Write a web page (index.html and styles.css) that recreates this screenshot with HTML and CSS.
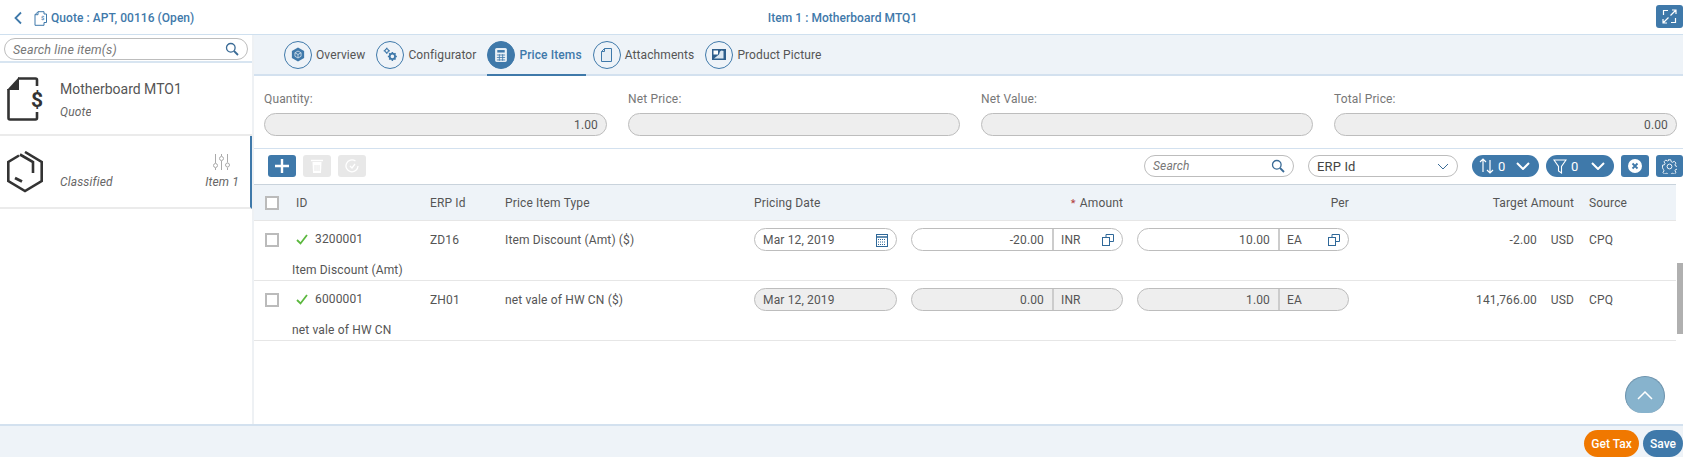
FILE: index.html
```html
<!DOCTYPE html>
<html lang="en">
<head>
    <meta charset="UTF-8">
    <title>Item 1 : Motherboard MTQ1</title>
    <link rel="stylesheet" href="styles.css">
</head>
<body>
    <header class="topbar">
        <div class="crumb">
            <svg class="back" width="10" height="14" viewBox="0 0 10 14"><path d="M8 1.500 2.500 7 8 12.500" fill="none" stroke="#3f79aa" stroke-width="1.800"/></svg>
            <svg class="crumb-doc" width="13" height="15" viewBox="0 0 13 15"><path d="M4 .7h6v2.300M1 3.700V14.300h9v-2.800M4 .7v3H1zM10 3h2.500v8.500H10" fill="none" stroke="#3f79aa"/><text x="7" y="9" font-size="6" fill="#3f79aa" font-family="Roboto">$</text></svg>
            <span>Quote : APT, 00116 (Open)</span>
        </div>
        <div class="topbar-title">Item 1 : Motherboard MTQ1</div>
        <div class="topbar-end">
            <button class="square-btn expand">
                <svg width="15" height="15" viewBox="0 0 15 15" fill="none" stroke="#fff" stroke-width="1.200"><path d="M6 1.500H1.500V6M9 13.500h4.500V9M8.500 6.500l5-5M10 1h4v4M6.500 8.500l-5 5M1 10v4h4"/></svg>
            </button>
        </div>
    </header>

    <div class="main">
        <aside class="sidebar">
            <div class="side-search">
                <div class="pill search-pill">
                    <span class="placeholder">Search line item(s)</span>
                    <svg width="14" height="14" viewBox="0 0 14 14" fill="none" stroke="#3a6b96" stroke-width="1.300"><circle cx="5.800" cy="5.800" r="4.300"/><path d="m9 9 4 4" stroke-width="1.800"/></svg>
                </div>
            </div>
            <div class="side-item">
                <svg class="side-icon" width="36" height="44" viewBox="0 0 36 44"><path d="M11 1.500h17.500a1.500 1.500 0 0 1 1.500 1.500v6M30 35v6a1.500 1.500 0 0 1-1.500 1.500H3A1.500 1.500 0 0 1 1.500 41V12" fill="none" stroke="#333" stroke-width="2.600"/><path d="M0 13 12 0v13z" fill="#333"/><text x="30" y="30" text-anchor="middle" font-size="21" font-weight="700" fill="#333" font-family="Roboto">$</text></svg>
                <div class="side-text">
                    <div class="side-name">Motherboard MTO1</div>
                    <div class="side-sub quote-sub">Quote</div>
                </div>
            </div>
            <div class="side-item active">
                <svg class="side-icon" width="36" height="42" viewBox="0 0 36 42" fill="none" stroke="#333" stroke-width="2.600"><path d="M12 4.500 1.300 11v19L18 40l16.700-10V11L18 1M13 3.500l13 7.500v11"/><path d="m8 27 7 3.500" stroke-width="2.800"/></svg>
                <div class="side-text">
                    <div class="side-name">&nbsp;</div>
                    <div class="side-sub class-sub">Classified</div>
                </div>
                <div class="side-end">
                    <svg width="17" height="16" viewBox="0 0 17 16" fill="none" stroke="#aaa"><path d="M2.500 0v9M2.500 14v2M8.500 0v2M8.500 7v9M14.500 0v8.500M14.500 13.500V16"/><circle cx="2.500" cy="11.500" r="2"/><circle cx="8.500" cy="4.500" r="2"/><circle cx="14.500" cy="11" r="2"/></svg>
                    <span class="side-sub">Item 1</span>
                </div>
            </div>
        </aside>

        <section class="content">
            <nav class="tabs">
                <a class="tab">
                    <span class="tab-circle"><svg width="14" height="15" viewBox="0 0 16 17"><path d="M8 .5 15 4.500v8l-7 4-7-4v-8z" fill="#3f79aa"/><path d="M8 4.500 11.500 6.500v4L8 12.500l-3.500-2v-4zM8 8.500v4M4.500 6.500l3.500 2 3.500-2" fill="none" stroke="#cfdde9"/></svg></span>
                    Overview
                </a>
                <a class="tab">
                    <span class="tab-circle"><svg width="15" height="15" viewBox="0 0 20 20" fill="none" stroke="#3f79aa"><circle cx="5" cy="5" r="2.300" stroke-width="1.500"/><circle cx="12.500" cy="12.500" r="3.600" stroke-width="2.400"/><path d="M12.500 6.500v2M12.500 16.500v2M6.500 12.500h2M16.500 12.500h2M8.300 8.300l1.400 1.400M15.300 15.300l1.400 1.400M16.700 8.300l-1.400 1.400M9.700 15.300l-1.400 1.400M5 1v1.500M5 7.500V9M1 5h1.500M7.500 5H9" stroke-width="2"/></svg></span>
                    Configurator
                </a>
                <a class="tab active">
                    <span class="tab-circle"><svg width="12" height="14" viewBox="0 0 14 17"><rect x=".5" y=".5" width="13" height="16" rx="1" fill="#e9f0f6" stroke="#fff"/><rect x="2.500" y="2.500" width="9" height="3" fill="#3f79aa"/><path d="M2 8.500h10M2 11.500h10M2 14.500h10M5 7.500v8M9 7.500v8" stroke="#3f79aa"/></svg></span>
                    Price Items
                </a>
                <a class="tab">
                    <span class="tab-circle"><svg width="11" height="14" viewBox="0 0 11 14"><path d="M3.500.5h7v13H.5V3.500zM3.500.5v3h-3" fill="#e6eef5" stroke="#3f79aa"/></svg></span>
                    Attachments
                </a>
                <a class="tab">
                    <span class="tab-circle"><svg width="14" height="11" viewBox="0 0 14 11"><rect width="14" height="11" fill="#2f5f8c"/><rect x="1.500" y="1.500" width="4.500" height="4" fill="#fff"/><path d="m2 9.500 5-4 1-3 1.500-1 2 .5v7.500z" fill="#dbe7f1"/></svg></span>
                    Product Picture
                </a>
            </nav>

            <div class="summary">
                <div class="field">
                    <label>Quantity:</label>
                    <div class="pill readonly num">1.00</div>
                </div>
                <div class="field">
                    <label>Net Price:</label>
                    <div class="pill readonly num"></div>
                </div>
                <div class="field">
                    <label>Net Value:</label>
                    <div class="pill readonly num"></div>
                </div>
                <div class="field">
                    <label>Total Price:</label>
                    <div class="pill readonly num">0.00</div>
                </div>
            </div>

            <div class="toolbar">
                <button class="square-btn wide">
                    <svg width="14" height="14" viewBox="0 0 14 14"><path d="M7 0v14M0 7h14" stroke="#fff" stroke-width="2.400"/></svg>
                </button>
                <button class="square-btn wide off">
                    <svg width="12" height="14" viewBox="0 0 12 14"><path d="M0 1.500h12" stroke="#fff" stroke-width="1.500"/><path d="M1.500 3h9L10 14H2z" fill="#fff"/><path d="M4 6v6M6 6v6M8 6v6" stroke="#e8e8e8"/></svg>
                </button>
                <button class="square-btn wide off">
                    <svg width="14" height="14" viewBox="0 0 14 14" fill="none" stroke="#fff" stroke-width="1.300"><path d="M10.500 2A6 6 0 1 0 13 7"/><path d="m5 7 2 2 3-4"/></svg>
                </button>
                <div class="toolbar-end">
                    <div class="pill search-pill tool-search">
                        <span class="placeholder">Search</span>
                        <svg width="14" height="14" viewBox="0 0 14 14" fill="none" stroke="#3a6b96" stroke-width="1.300"><circle cx="5.800" cy="5.800" r="4.300"/><path d="m9 9 4 4" stroke-width="1.800"/></svg>
                    </div>
                    <div class="pill tool-select">
                        <span>ERP Id</span>
                        <svg width="12" height="7" viewBox="0 0 12 7"><path d="m1 1 5 5 5-5" fill="none" stroke="#3a6b96"/></svg>
                    </div>
                    <button class="count-pill sort">
                        <svg width="15" height="16" viewBox="0 0 15 16" fill="none" stroke="#fff" stroke-width="1.200"><path d="M4 14V1M1 4l3-3 3 3M11 2v13M8 12l3 3 3-3"/></svg>
                        <span>0</span>
                        <svg class="caret" width="14" height="8" viewBox="0 0 14 8"><path d="m1 1 6 6 6-6" fill="none" stroke="#fff" stroke-width="2"/></svg>
                    </button>
                    <button class="count-pill filter">
                        <svg width="14" height="15" viewBox="0 0 14 15" fill="none" stroke="#fff" stroke-width="1.100"><path d="M1 1h12L8.500 7.500V14l-3-2V7.500z"/></svg>
                        <span>0</span>
                        <svg class="caret" width="14" height="8" viewBox="0 0 14 8"><path d="m1 1 6 6 6-6" fill="none" stroke="#fff" stroke-width="2"/></svg>
                    </button>
                    <button class="square-btn clear">
                        <svg width="14" height="14" viewBox="0 0 14 14"><circle cx="7" cy="7" r="7" fill="#fff"/><path d="m4.500 4.500 5 5m0-5-5 5" stroke="#3f79aa" stroke-width="1.800"/></svg>
                    </button>
                    <button class="square-btn gear">
                        <svg width="15" height="15" viewBox="0 0 15 15" fill="none" stroke="#fff" stroke-width=".9"><path d="M6.200.8h2.600l.4 1.900 1.300.6 1.700-1 1.800 1.800-1 1.700.6 1.300 1.900.4v2.600l-1.900.4-.6 1.300 1 1.700-1.800 1.800-1.700-1-1.300.6-.4 1.900H6.200l-.4-1.900-1.300-.6-1.700 1-1.800-1.800 1-1.700-.6-1.300L.5 8.800V6.200l1.900-.4.6-1.300-1-1.700 1.800-1.800 1.700 1 1.300-.6z"/><circle cx="7.500" cy="7.500" r="2.400"/></svg>
                    </button>
                </div>
            </div>

            <div class="table">
                <div class="grid-row head">
                    <span class="check"></span>
                    <span>ID</span>
                    <span>ERP Id</span>
                    <span>Price Item Type</span>
                    <span>Pricing Date</span>
                    <span class="right amount-head"><i class="star">*</i> Amount</span>
                    <span class="right">Per</span>
                    <span class="right span-2">Target Amount</span>
                    <span class="source">Source</span>
                </div>

                <div class="line">
                    <div class="grid-row">
                        <span class="check"></span>
                        <span class="id-cell"><svg width="12" height="11" viewBox="0 0 12 11"><path d="m1 6 3.500 3.500L11 1" fill="none" stroke="#5cb83f" stroke-width="1.800"/></svg>3200001</span>
                        <span>ZD16</span>
                        <span>Item Discount (Amt) ($)</span>
                        <div class="pill input date">
                            Mar 12, 2019
                            <svg width="12" height="14" viewBox="0 0 12 14" fill="none" stroke="#2f6899"><rect x=".5" y="1.500" width="11" height="12"/><path d="M.5 4h11" stroke-width="1.500"/><path d="M2 6.500h8M2 9h8M2 11.500h8" stroke-dasharray="1 1"/></svg>
                        </div>
                        <div class="pill input combo">
                            <span class="combo-num">-20.00</span>
                            <span class="combo-unit">INR<svg width="12" height="12" viewBox="0 0 12 12" fill="none" stroke="#2f6899"><rect x=".5" y="3.500" width="7" height="8"/><path d="M4 3.500V.5h7.500v7h-4"/></svg></span>
                        </div>
                        <div class="pill input combo">
                            <span class="combo-num">10.00</span>
                            <span class="combo-unit">EA<svg width="12" height="12" viewBox="0 0 12 12" fill="none" stroke="#2f6899"><rect x=".5" y="3.500" width="7" height="8"/><path d="M4 3.500V.5h7.500v7h-4"/></svg></span>
                        </div>
                        <span class="right">-2.00</span>
                        <span class="right">USD</span>
                        <span class="source">CPQ</span>
                    </div>
                    <div class="line-note">Item Discount (Amt)</div>
                </div>

                <div class="line">
                    <div class="grid-row">
                        <span class="check"></span>
                        <span class="id-cell"><svg width="12" height="11" viewBox="0 0 12 11"><path d="m1 6 3.500 3.500L11 1" fill="none" stroke="#5cb83f" stroke-width="1.800"/></svg>6000001</span>
                        <span>ZH01</span>
                        <span>net vale of HW CN ($)</span>
                        <div class="pill input date readonly">Mar 12, 2019</div>
                        <div class="pill input combo readonly">
                            <span class="combo-num">0.00</span>
                            <span class="combo-unit">INR</span>
                        </div>
                        <div class="pill input combo readonly">
                            <span class="combo-num">1.00</span>
                            <span class="combo-unit">EA</span>
                        </div>
                        <span class="right">141,766.00</span>
                        <span class="right">USD</span>
                        <span class="source">CPQ</span>
                    </div>
                    <div class="line-note">net vale of HW CN</div>
                </div>

                <div class="scroll-thumb"></div>
            </div>

            <div class="to-top">
                <svg width="16" height="9" viewBox="0 0 16 9"><path d="m1 8 7-7 7 7" fill="none" stroke="#fff" stroke-width="1.500"/></svg>
            </div>
        </section>
    </div>

    <footer class="footer">
        <button class="round-btn tax">Get Tax</button>
        <button class="round-btn save">Save</button>
    </footer>
</body>
</html>
```

FILE: styles.css
```css
* {
    margin: 0;
    padding: 0;
    box-sizing: border-box;
}

body {
    font-family: Roboto, 'Liberation Sans', sans-serif;
    font-size: 12px;
    letter-spacing: .15px;
    color: #555;
    background: #fff;
    width: 1683px;
    height: 457px;
    overflow: hidden;
    display: flex;
    flex-direction: column;
}

button {
    border: none;
    font-family: inherit;
}

.topbar {
    height: 35px;
    flex: none;
    display: grid;
    grid-template-columns: 1fr 1fr 1fr;
    align-items: center;
    border-bottom: 1px solid #cfe0ef;
    color: #3f79aa;
    font-weight: 500;
    font-size: 12px;
    letter-spacing: .05px;
}

.crumb {
    display: flex;
    align-items: center;
    padding: 2px 0 0 13px;
}

.crumb-doc {
    margin: 0 4px 0 11px;
}

.topbar-title {
    text-align: center;
    padding: 2px 0 0 2px;
}

.topbar-end {
    display: flex;
    justify-content: flex-end;
}

.square-btn {
    background: #3f79aa;
    border-radius: 3px;
    display: flex;
    align-items: center;
    justify-content: center;
    width: 27px;
    height: 23px;
}

.expand {
    margin-bottom: 1px;
}

.main {
    flex: 1;
    display: flex;
    min-height: 0;
}

.sidebar {
    width: 254px;
    flex: none;
    border-right: 2px solid #eef1f4;
}

.side-search {
    height: 28px;
    padding: 3px 4px 0;
    border-bottom: 2px solid #d8e5f1;
}

.pill {
    border: 1px solid #bdbdbd;
    border-radius: 12px;
    height: 23px;
    display: flex;
    align-items: center;
    background: #fff;
}

.search-pill {
    justify-content: space-between;
    padding: 0 8px;
    height: 22px;
}

.placeholder {
    font-style: italic;
    color: #777;
}

.side-search .placeholder {
    font-size: 12.500px;
}

.side-item {
    height: 73px;
    display: flex;
    align-items: center;
    border-bottom: 2px solid #ebebeb;
    padding-left: 7px;
}

.side-item.active {
    border-right: 2px solid #3f79aa;
}

.side-text {
    margin-left: 17px;
}

.active .side-text {
    margin-top: -6px;
}

.side-name {
    font-size: 14px;
    letter-spacing: 0;
    color: #555;
    height: 20px;
    line-height: 20px;
    margin-bottom: 6px;
}

.side-sub {
    font-style: italic;
    color: #666;
    overflow: hidden;
    white-space: nowrap;
}

.quote-sub {
    width: 31px;
}

.class-sub {
    width: 53px;
}

.side-end {
    margin: -1px 11px 0 auto;
    display: flex;
    flex-direction: column;
    align-items: flex-end;
    gap: 5px;
}

.side-end svg {
    margin-right: 9px;
}

.content {
    flex: 1;
    min-width: 0;
    position: relative;
}

.tabs {
    height: 41px;
    background: #eef3f8;
    border-bottom: 2px solid #d3e1ef;
    display: flex;
    padding-left: 30px;
    gap: 7px;
    letter-spacing: .1px;
}

.tab {
    display: flex;
    align-items: center;
    gap: 4px;
    padding-right: 4px;
    height: 41px;
    color: #555;
    border-bottom: 2px solid transparent;
}

.tab.active {
    color: #3f79aa;
    font-weight: 500;
    border-bottom-color: #3f79aa;
}

.tab-circle {
    width: 28px;
    height: 28px;
    border: 1px solid #3f79aa;
    border-radius: 50%;
    display: flex;
    align-items: center;
    justify-content: center;
    flex: none;
}

.tab.active .tab-circle {
    background: #3f79aa;
}

.summary {
    height: 73px;
    display: grid;
    grid-template-columns: 343px 332px 332px 343px;
    column-gap: 21px;
    padding: 16px 6px 0 10px;
    border-bottom: 1px solid #d3e1ef;
}

.field label {
    display: block;
    color: #777;
    height: 14px;
    line-height: 14px;
    margin-bottom: 7px;
}

.readonly {
    background: #eee;
}

.num {
    justify-content: flex-end;
    padding-right: 8px;
}

.toolbar {
    height: 35px;
    display: flex;
    align-items: center;
    gap: 7px;
    padding: 0 0 1px 14px;
}

.wide {
    width: 28px;
    height: 22px;
}

.off {
    background: #e8e8e8;
}

.toolbar-end {
    margin-left: auto;
    display: flex;
    align-items: center;
}

.tool-search {
    width: 150px;
    margin-right: 14px;
}

.tool-select {
    width: 150px;
    height: 22px;
    justify-content: space-between;
    padding: 0 8px;
    margin-right: 14px;
    color: #444;
    font-size: 13px;
}

.count-pill {
    height: 22px;
    border-radius: 11px;
    background: #3f79aa;
    color: #fff;
    display: flex;
    align-items: center;
    padding: 0 7px;
    font-size: 13px;
}

.count-pill span {
    margin-left: 4px;
}

.count-pill .caret {
    margin-left: auto;
    margin-right: 2px;
}

.sort {
    width: 67px;
    margin-right: 7px;
}

.filter {
    width: 68px;
    margin-right: 7px;
}

.clear {
    width: 28px;
    height: 22px;
    margin-right: 7px;
}

.gear {
    height: 22px;
}

.table {
    position: relative;
}

.grid-row {
    display: grid;
    grid-template-columns: 31px 134px 75px 249px 157px 226px 212px 188px 37px 102px;
    align-items: center;
    padding-left: 11px;
}

.date,
.combo {
    margin-right: 14px;
}

.combo + .combo {
    margin-right: 0;
}

.head {
    width: 1422px;
    height: 36px;
    background: #eef3f8;
    border-top: 1px solid #c9d3dc;
}

.check {
    width: 14px;
    height: 14px;
    border: 2px solid #bbb;
    background: #fff;
}

.right {
    text-align: right;
}

.span-2 {
    grid-column: span 2;
}

.source {
    padding-left: 15px;
}

.amount-head {
    padding-right: 14px;
}

.star {
    color: #b03a3a;
    font-style: normal;
    font-size: 11px;
    margin-right: 1px;
}

.line {
    width: 1422px;
    height: 60px;
    border-bottom: 1px solid #e6e6e6;
    padding-top: 7px;
}

.head + .line {
    border-top: 1px solid #e6e6e6;
    height: 61px;
}

.id-cell {
    display: flex;
    align-items: center;
    gap: 7px;
    margin-top: -1px;
}

.input {
    justify-content: space-between;
    padding: 0 8px;
}

.combo {
    padding: 0;
}

.combo-num {
    flex: 1;
    text-align: right;
    padding-right: 8px;
}

.combo-unit {
    width: 70px;
    height: 21px;
    border-left: 2px solid #ccc;
    display: flex;
    align-items: center;
    justify-content: space-between;
    padding: 0 8px 0 7px;
}

.line-note {
    margin-top: 12px;
    padding-left: 38px;
}

.scroll-thumb {
    position: absolute;
    right: 0;
    top: 79px;
    width: 6px;
    height: 71px;
    background: #b0b0b0;
}

.to-top {
    position: absolute;
    right: 18px;
    bottom: 11px;
    width: 40px;
    height: 37px;
    overflow: hidden;
    background: #87b3cd;
    border: 1px solid #6d93ad;
    border-bottom: none;
    border-radius: 20px 20px 17px 17px;
    display: flex;
    align-items: center;
    justify-content: center;
}

.footer {
    height: 33px;
    flex: none;
    background: #eef3f8;
    border-top: 2px solid #d3e1ef;
    display: flex;
    justify-content: flex-end;
    align-items: flex-end;
    gap: 4px;
}

.round-btn {
    height: 27px;
    border-radius: 14px;
    color: #fff;
    font-weight: 500;
    font-size: 12px;
}

.tax {
    width: 55px;
    background: #f07800;
}

.save {
    width: 40px;
    background: #3f79aa;
}
```
